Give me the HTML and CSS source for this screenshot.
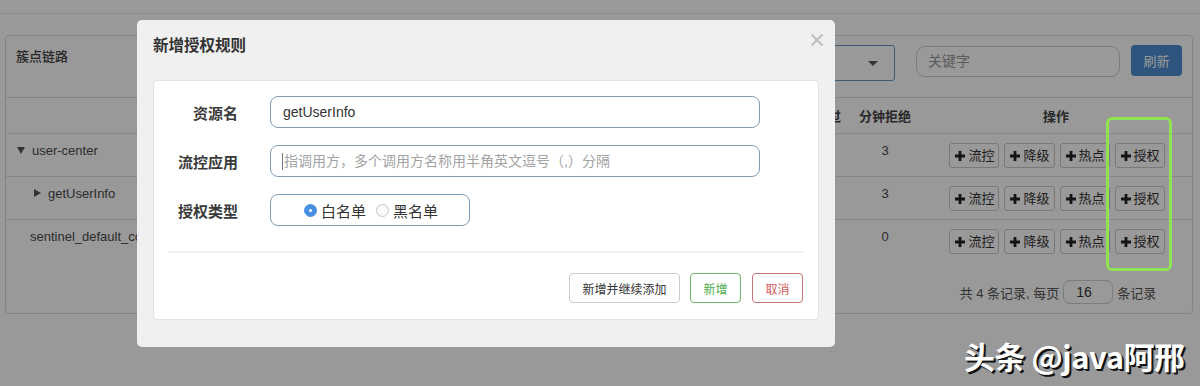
FILE: index.html
```html
<!DOCTYPE html>
<html lang="zh">
<head>
<meta charset="utf-8">
<link rel="stylesheet" href="styles.css">
</head>
<body>
<div class="topbar"></div>
<section class="panel">
  <header class="panel-head">
    <span class="panel-title">簇点链路</span>
    <div class="tools">
      <div class="select"><span class="caret"></span></div>
      <div class="kw">关键字</div>
      <div class="btn-primary">刷新</div>
    </div>
  </header>
  <div class="grid">
    <div class="th"></div>
    <div class="th">分钟通过</div>
    <div class="th">分钟拒绝</div>
    <div class="th">操作</div>

    <div class="td name lvl0"><span class="tri down"></span>user-center</div>
    <div class="td num">3</div>
    <div class="td num">3</div>
    <div class="td ops">
      <span class="obtn"><svg width="10" height="10" viewBox="0 0 10 10"><path d="M5 0v10M0 5h10"/></svg>流控</span>
      <span class="obtn"><svg width="10" height="10" viewBox="0 0 10 10"><path d="M5 0v10M0 5h10"/></svg>降级</span>
      <span class="obtn"><svg width="10" height="10" viewBox="0 0 10 10"><path d="M5 0v10M0 5h10"/></svg>热点</span>
      <span class="obtn"><svg width="10" height="10" viewBox="0 0 10 10"><path d="M5 0v10M0 5h10"/></svg>授权</span>
    </div>

    <div class="td name lvl1"><span class="tri right"></span>getUserInfo</div>
    <div class="td num">3</div>
    <div class="td num">3</div>
    <div class="td ops">
      <span class="obtn"><svg width="10" height="10" viewBox="0 0 10 10"><path d="M5 0v10M0 5h10"/></svg>流控</span>
      <span class="obtn"><svg width="10" height="10" viewBox="0 0 10 10"><path d="M5 0v10M0 5h10"/></svg>降级</span>
      <span class="obtn"><svg width="10" height="10" viewBox="0 0 10 10"><path d="M5 0v10M0 5h10"/></svg>热点</span>
      <span class="obtn"><svg width="10" height="10" viewBox="0 0 10 10"><path d="M5 0v10M0 5h10"/></svg>授权</span>
    </div>

    <div class="td name lvl2 last">sentinel_default_context</div>
    <div class="td num last">0</div>
    <div class="td num last">0</div>
    <div class="td ops last">
      <span class="obtn"><svg width="10" height="10" viewBox="0 0 10 10"><path d="M5 0v10M0 5h10"/></svg>流控</span>
      <span class="obtn"><svg width="10" height="10" viewBox="0 0 10 10"><path d="M5 0v10M0 5h10"/></svg>降级</span>
      <span class="obtn"><svg width="10" height="10" viewBox="0 0 10 10"><path d="M5 0v10M0 5h10"/></svg>热点</span>
      <span class="obtn"><svg width="10" height="10" viewBox="0 0 10 10"><path d="M5 0v10M0 5h10"/></svg>授权</span>
    </div>

    <div class="pager">共 4 条记录, 每页 <span class="psize">16</span> 条记录</div>
  </div>
</section>

<div class="backdrop"></div>
<div class="highlight"></div>

<div class="modal">
  <div class="modal-head">
    <span class="modal-title">新增授权规则</span>
    <svg class="close" width="14" height="14" viewBox="0 0 14 14"><path d="M1.5 1.5l11 11M12.5 1.5l-11 11"/></svg>
  </div>
  <div class="modal-body">
    <div class="form">
      <label class="lbl">资源名</label>
      <div class="field val">getUserInfo</div>
      <label class="lbl">流控应用</label>
      <div class="field ph"><span class="cursor"></span>指调用方，多个调用方名称用半角英文逗号（,）分隔</div>
      <label class="lbl">授权类型</label>
      <div class="radios">
        <span class="radio on"></span><span class="rtext">白名单</span>
        <span class="radio"></span><span class="rtext">黑名单</span>
      </div>
    </div>
    <div class="sep"></div>
    <div class="actions">
      <span class="mbtn">新增并继续添加</span>
      <span class="mbtn ok">新增</span>
      <span class="mbtn cancel">取消</span>
    </div>
  </div>
</div>

<div class="watermark">头条 @java阿邢</div>
</body>
</html>
```
FILE: styles.css
```css
* { box-sizing: border-box; }
html, body { margin: 0; padding: 0; }
body {
  width: 1200px;
  height: 386px;
  overflow: hidden;
  position: relative;
  background: #fff;
  font-family: "Liberation Sans", "Noto Sans CJK SC", sans-serif;
  color: #4a4a4a;
  font-size: 13px;
}
.topbar { height: 14px; border-bottom: 1px solid #e6e6e6; }

.panel {
  margin: 21px 7px 0 5px;
  height: 279px;
  border: 1px solid #dcdcdc;
  border-radius: 4px;
}
.panel-head {
  height: 62px;
  border-bottom: 1px solid #e0e0e0;
  display: flex;
  align-items: flex-start;
  padding: 9px 10px 0 10px;
}
.panel-title { margin-top: 2px; line-height: 20px; font-size: 13px; font-weight: 500; color: #444; }
.tools { margin-left: auto; display: flex; align-items: flex-start; }
.select {
  width: 200px; height: 36px;
  border: 1px solid #6d98c4; border-radius: 3px;
  position: relative;
}
.caret {
  position: absolute; right: 16px; top: 15px;
  border-left: 5px solid transparent; border-right: 5px solid transparent;
  border-top: 5px solid #555;
}
.kw {
  margin-left: 21px; margin-top: 1px;
  width: 204px; height: 31px;
  border: 1px solid #cfcfcf; border-radius: 9px;
  padding: 0 11px; line-height: 29px;
  font-size: 14px; color: #999;
}
.btn-primary {
  margin-left: 11px;
  width: 51px; height: 31px;
  background: #4b8ed3; border-radius: 4px;
  color: #fff; font-size: 13px;
  display: flex; align-items: center; justify-content: center;
}

.grid { display: grid; grid-template-columns: 1fr 70px 70px 272px; }
.th {
  height: 36px; border-bottom: 1px solid #e2e2e2;
  display: flex; align-items: center; justify-content: center;
  font-size: 13px; font-weight: 600; color: #444;
}
.td { height: 43px; border-bottom: 1px solid #e2e2e2; padding-top: 8px; line-height: 18px; color: #4a4a4a; }
.td.last { border-bottom: none; }
.num { text-align: center; }
.name { display: flex; align-items: flex-start; }
.lvl0 { padding-left: 11px; }
.lvl1 { padding-left: 28px; }
.lvl2 { padding-left: 24px; }
.tri { display: inline-block; margin-right: 7px; margin-top: 5px; }
.tri.down { border-left: 4.5px solid transparent; border-right: 4.5px solid transparent; border-top: 7px solid #555; }
.tri.right { border-top: 4.5px solid transparent; border-bottom: 4.5px solid transparent; border-left: 7px solid #555; margin-top: 4px; }
.ops { display: flex; justify-content: center; gap: 5px; padding-top: 9px; padding-left: 2px; }
.obtn {
  height: 25px; padding: 0 4px 0 5px;
  border: 1px solid #cacaca; border-radius: 3px;
  display: inline-flex; align-items: center; gap: 3px;
  font-size: 13px; color: #333; background: #fff;
}
.obtn svg path { stroke: #222; stroke-width: 2.8; fill: none; }
.pager {
  grid-column: 4;
  display: flex; align-items: center; justify-content: center;
  padding-top: 17px; padding-left: 4px;
  font-size: 13px; color: #555; gap: 4px;
}
.psize {
  width: 50px; height: 24px;
  border: 1px solid #cfcfcf; border-radius: 7px;
  padding-left: 12px; line-height: 22px;
  font-size: 14px; color: #333;
}

.backdrop { position: absolute; left: 0; top: 0; width: 1200px; height: 386px; background: rgba(0,0,0,0.4); }
.highlight {
  position: absolute; left: 1106px; top: 117px; width: 66px; height: 154px;
  border: 3px solid #8fe352; border-radius: 6px;
}

.modal {
  position: absolute; left: 137px; top: 20px; width: 698px; height: 327px;
  background: #f0f0f0; border-radius: 5px;
  padding: 0 16px;
}
.modal-head { height: 60px; display: flex; align-items: flex-start; padding-top: 15px; }
.modal-title { font-size: 15.5px; font-weight: 700; color: #333; line-height: 22px; }
.close { margin-left: auto; margin-top: -2px; margin-right: -5px; }
.close path { stroke: #c2c2c2; stroke-width: 2.4; fill: none; }
.modal-body {
  height: 240px; background: #fff;
  border: 1px solid #e2e2e2; border-radius: 4px;
  padding-top: 15px;
}
.form {
  display: grid; grid-template-columns: 84px 490px;
  column-gap: 32px; row-gap: 17px;
  align-items: center;
}
.lbl { text-align: right; font-size: 15px; font-weight: 600; color: #3a3a3a; }
.field {
  height: 32px; border: 1px solid #7e9cb5; border-radius: 8px;
  padding-left: 12px; line-height: 30px; font-size: 14px;
  display: flex; align-items: center;
}
.val { color: #333; }
.ph { color: #a3a3a3; }
.cursor { width: 1px; height: 17px; background: #777; margin-right: 1px; margin-left: -1px; }
.radios {
  width: 200px; height: 32px; border: 1px solid #7e9cb5; border-radius: 8px;
  display: flex; align-items: center; justify-content: center;
  font-size: 15px; color: #333; padding-left: 2px;
}
.radio {
  width: 13px; height: 13px; border-radius: 50%;
  border: 1px solid #c4c4c4; background: #fafafa;
  margin-right: 4px;
}
.radio.on { background: #4a90e2; border-color: #4a90e2; position: relative; }
.radio.on::after {
  content: ""; position: absolute; left: 4px; top: 4px; width: 3px; height: 3px;
  border-radius: 50%; background: #fff;
}
.rtext { margin-right: 10px; }
.rtext:last-child { margin-right: 0; }
.sep { margin: 25px 14px 0 14px; height: 2px; background: #f1f1f1; }
.actions {
  display: flex; justify-content: flex-end; gap: 10px;
  margin-top: 20px; padding-right: 15px;
}
.mbtn {
  height: 30px; padding: 0 12.5px;
  border: 1px solid #cdcdcd; border-radius: 4px;
  display: inline-flex; align-items: center;
  font-size: 12px; color: #333; background: #fff;
}
.mbtn.ok { border-color: #6db26d; color: #4cae4c; }
.mbtn.cancel { border-color: #c6757a; color: #d05a5a; margin-left: 1px; }

.watermark {
  position: absolute; left: 964px; top: 333px;
  font-size: 31px; font-weight: 700; color: #fff;
  font-family: "Noto Sans CJK SC", sans-serif;
  text-shadow: 2px 2px 0 #111, 1px 1px 0 #111;
  letter-spacing: -0.5px;
  white-space: nowrap;
}
```
